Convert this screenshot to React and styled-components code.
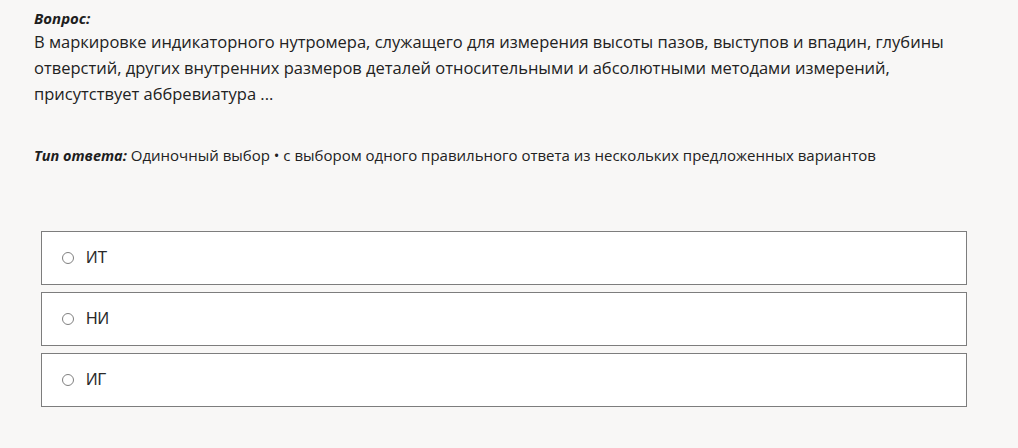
import React from "react";
import styled, { createGlobalStyle } from "styled-components";

const Global = createGlobalStyle`
  html, body { margin: 0; padding: 0; background: #f8f7f6; }
  body { font-family: "Open Sans", "Noto Sans", sans-serif; color: #222; }
`;

const Page = styled.main`
  padding: 8px 0 0 34px;
  width: 1018px;
  box-sizing: border-box;
`;

const Label = styled.span`
  font-weight: 700;
  font-style: italic;
  font-size: ${(p) => p.$size || 14}px;
  color: #1e1e1e;
`;

const Heading = styled.div`
  line-height: 20px;
`;

const QuestionText = styled.p`
  margin: 1px 0 0;
  font-size: 16.5px;
  line-height: 26px;
  width: 960px;
`;

const AnswerType = styled.p`
  margin: 37px 0 0;
  font-size: 15px;
  line-height: 22px;
`;

const Options = styled.ul`
  list-style: none;
  margin: 64px 0 0 7px;
  padding: 0;
  width: 926px;
  display: flex;
  flex-direction: column;
  gap: 7px;
`;

const Option = styled.li`
  box-sizing: border-box;
  height: 54px;
  background: #fff;
  border: 1px solid #7d7d7d;
  display: flex;
  align-items: center;
  padding-left: 20px;
  gap: 12px;
  font-family: "Liberation Sans", Arial, sans-serif;
  font-size: 16px;
  color: #2a2a2a;
  cursor: pointer;
`;

const Radio = styled.span`
  box-sizing: border-box;
  width: 12px;
  height: 12px;
  border-radius: 50%;
  border: 1px solid #808080;
  background: #fff;
  flex: none;
`;

const answers = ["ИТ", "НИ", "ИГ"];

export default function App() {
  return (
    <>
      <Global />
      <Page>
        <Heading>
          <Label $size={15}>Вопрос:</Label>
        </Heading>
        <QuestionText>
          В маркировке индикаторного нутромера, служащего для измерения высоты пазов, выступов и впадин, глубины
          отверстий, других внутренних размеров деталей относительными и абсолютными методами измерений,
          присутствует аббревиатура ...
        </QuestionText>
        <AnswerType>
          <Label $size={14.5}>Тип ответа:</Label> Одиночный выбор • с выбором одного правильного ответа из
          нескольких предложенных вариантов
        </AnswerType>
        <Options>
          {answers.map((a) => (
            <Option key={a}>
              <Radio />
              {a}
            </Option>
          ))}
        </Options>
      </Page>
    </>
  );
}
